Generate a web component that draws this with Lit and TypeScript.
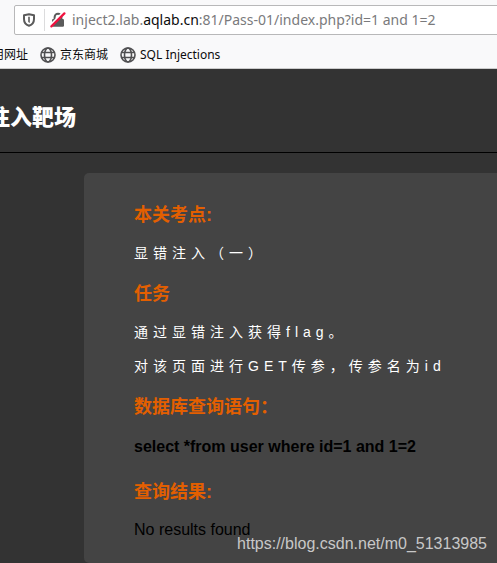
import { LitElement, html, css, svg } from "lit";
import { customElement, property } from "lit/decorators.js";

const shieldIcon = svg`<svg width="16" height="16" viewBox="0 0 16 16" aria-hidden="true">
  <path d="M8 2.2 L13 3.2 V7 C13 10.3 11 12.8 8 13.8 C5 12.8 3 10.3 3 7 V3.2 Z" fill="none" stroke="#5b5b5b" stroke-width="2" stroke-linejoin="round"/>
  <path d="M7.2 4.8 H8.8 V11 L7.2 10 Z" fill="#5b5b5b"/>
</svg>`;

const insecureIcon = svg`<svg width="16" height="16" viewBox="0 0 16 16" aria-hidden="true">
  <path d="M4.6 8 V5.2 A3.4 3.4 0 0 1 11.4 5.2 V8" fill="none" stroke="#5b5b5b" stroke-width="2"/>
  <rect x="2" y="7" width="12" height="7.8" rx="1.2" fill="#5b5b5b"/>
  <path d="M0.2 13.6 L13.2 0.6" stroke="#fff" stroke-width="2.4"/>
  <path d="M1.4 14.4 L14.4 1.4" stroke="#f0123f" stroke-width="2.2" stroke-linecap="round"/>
</svg>`;

const globeIcon = svg`<svg width="16" height="16" viewBox="0 0 16 16" aria-hidden="true">
  <g fill="none" stroke="#505052" stroke-width="1.6">
    <circle cx="8" cy="8" r="7"/>
    <ellipse cx="8" cy="8" rx="3.5" ry="7"/>
    <path d="M1.6 5.5 H14.4 M1.6 10.5 H14.4"/>
  </g>
</svg>`;

@customElement("browser-bar")
export class BrowserBar extends LitElement {
  @property() prefix = "";
  @property() domain = "";
  @property() path = "";

  static styles = css`
    :host {
      display: block;
      box-sizing: border-box;
      overflow: hidden;
      padding: 5px 0 3px;
      background: #f9f9fa;
      border-bottom: 1px solid #ccc;
      color: #0c0c0d;
      font-family: "Noto Sans", "Noto Sans CJK SC", sans-serif;
    }
    .address {
      display: flex;
      align-items: center;
      height: 28px;
      margin: 0 -4px 0 14px;
      padding-left: 6px;
      border: 1px solid #b8b8b9;
      border-radius: 2px;
      background: #fff;
    }
    button {
      display: flex;
      padding: 0;
      border: 0;
      background: none;
    }
    .divider {
      width: 1px;
      height: 22px;
      margin: 0 5px 0 7px;
      background: #dcdcdd;
    }
    .field {
      flex: 1;
      display: grid;
      margin-left: 6px;
      font-size: 14px;
      line-height: 24px;
    }
    .field > * {
      grid-area: 1 / 1;
      white-space: pre;
    }
    input {
      width: 100%;
      min-width: 0;
      height: 24px;
      padding: 0;
      border: 0;
      outline: 0;
      background: none;
      color: transparent;
      caret-color: #0c0c0d;
      font: inherit;
    }
    .shown {
      color: #7a7a7c;
      pointer-events: none;
    }
    .shown b {
      color: #0c0c0d;
      font-weight: 400;
    }
    nav {
      display: flex;
      gap: 12px;
      margin: 10px 0 0 -8px;
      font-size: 12px;
      line-height: 20px;
    }
    nav a {
      display: flex;
      align-items: center;
      gap: 4px;
      color: inherit;
      text-decoration: none;
      white-space: nowrap;
    }
  `;

  render() {
    return html`
      <div class="address">
        <button aria-label="Tracking protection">${shieldIcon}</button>
        <span class="divider"></span>
        <button aria-label="Connection is not secure">${insecureIcon}</button>
        <div class="field">
          <input aria-label="Address" .value=${this.prefix + this.domain + this.path} />
          <span class="shown" aria-hidden="true">${this.prefix}<b>${this.domain}</b>${this.path}</span>
        </div>
      </div>
      <nav>
        <a href="#">用网址</a>
        <a href="#">${globeIcon}京东商城</a>
        <a href="#">${globeIcon}SQL Injections</a>
      </nav>
    `;
  }
}

@customElement("app-root")
export class AppRoot extends LitElement {
  static styles = css`
    :host {
      position: relative;
      display: flex;
      flex-direction: column;
      min-height: 100vh;
      overflow: hidden;
      background: #333;
      color: #000;
      font-family: "Liberation Sans", "Noto Sans CJK SC", sans-serif;
    }
    header {
      padding: 33px 0 18px;
      border-bottom: 1px solid #000;
    }
    h1 {
      margin: 0 0 0 -12px;
      color: #fff;
      font-size: 22px;
      line-height: 32px;
      font-weight: 900;
    }
    main {
      flex: 1;
      margin: 20px 0 0 84px;
      padding: 30px 0 16px 50px;
      border-radius: 5px 0 0 5px;
      background: #444;
    }
    h2 {
      margin: 19px 0 16px;
      color: #e35f00;
      font-size: 18px;
      line-height: 24px;
    }
    h2:first-child {
      margin-top: 0;
    }
    p {
      margin: 14px 0;
      font-size: 16px;
      line-height: 20px;
    }
    p:last-child {
      margin-bottom: 0;
    }
    .note {
      color: #fff;
      font-size: 14px;
      letter-spacing: 5px;
    }
    .query {
      margin: 18px 0 23px;
      font-weight: 700;
    }
    .watermark {
      position: absolute;
      right: 10px;
      bottom: 9px;
      color: #c8c8c8;
      font-size: 16px;
      line-height: 20px;
    }
  `;

  render() {
    return html`
      <browser-bar
        prefix="inject2.lab."
        domain="aqlab.cn"
        path=":81/Pass-01/index.php?id=1 and 1=2"
      ></browser-bar>
      <header><h1>注入靶场</h1></header>
      <main>
        <h2>本关考点:</h2>
        <p class="note">显错注入（一）</p>
        <h2>任务</h2>
        <p class="note">通过显错注入获得flag。</p>
        <p class="note">对该页面进行GET传参，传参名为id</p>
        <h2>数据库查询语句：</h2>
        <p class="query">select *from user where id=1 and 1=2</p>
        <h2>查询结果:</h2>
        <p>No results found</p>
      </main>
      <span class="watermark">https://blog.csdn.net/m0_51313985</span>
    `;
  }
}
